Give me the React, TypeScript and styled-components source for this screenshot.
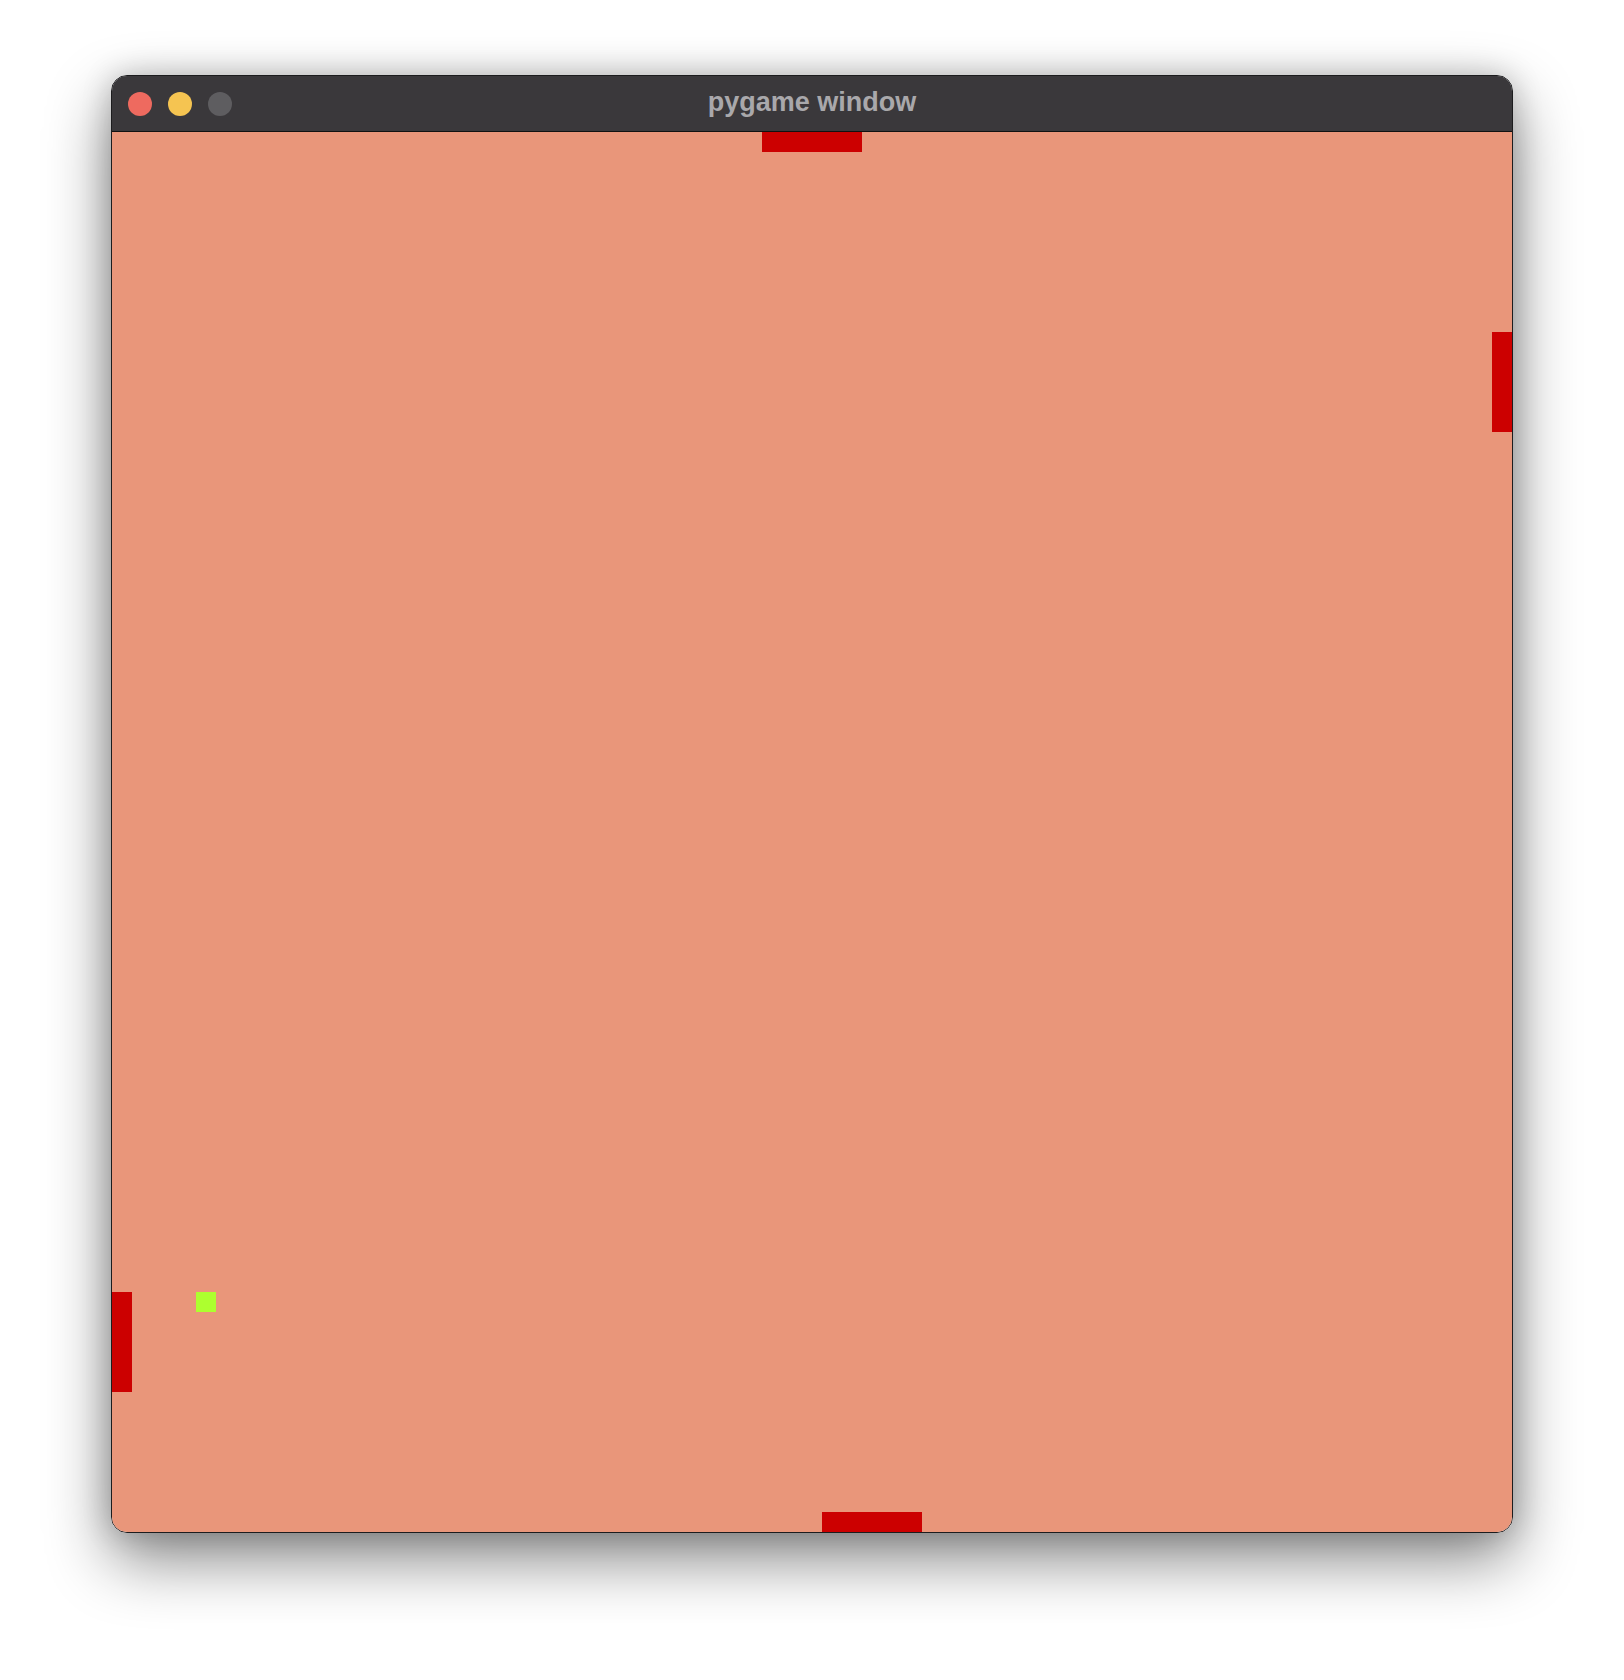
import React from 'react';
import styled, { createGlobalStyle } from 'styled-components';

const GlobalStyle = createGlobalStyle`
  html, body {
    margin: 0;
    padding: 0;
    background: #ffffff;
  }
`;

const Page = styled.div`
  width: 1624px;
  height: 1680px;
  padding: 75px 0 0 111px;
  box-sizing: border-box;
`;

const Window = styled.div`
  width: 1400px;
  border: 1px solid #1c1c1e;
  border-radius: 16px;
  overflow: hidden;
  box-shadow: 0 26px 64px rgba(0, 0, 0, 0.48), 0 0 30px rgba(0, 0, 0, 0.2);
`;

const TitleBar = styled.div`
  position: relative;
  display: flex;
  align-items: center;
  gap: 16px;

  height: 55px;
  padding: 0 16px;

  background-color: #3a383b;
  border-bottom: 1px solid #111;
`;

const Light = styled.span<{ $color: string }>`
  width: 24px;
  height: 24px;
  border-radius: 50%;
  background-color: ${({ $color }) => $color};
`;

const Title = styled.div`
  position: absolute;
  left: 0;
  right: 0;
  top: 0;
  bottom: 2px;

  display: flex;
  align-items: center;
  justify-content: center;

  font-family: 'Liberation Sans', Arial, sans-serif;
  font-weight: 700;
  font-size: 27px;
  color: #a9a8ab;
  pointer-events: none;
`;

const Canvas = styled.div`
  position: relative;
  width: 1400px;
  height: 1400px;
  background-color: #e9967a;
`;

const Block = styled.div<{ $color: string }>`
  position: absolute;
  background-color: ${({ $color }) => $color};
`;

const PADDLE = '#cc0000';
const BALL = '#adff2f';

// game objects, in canvas pixels
const objects = [
  { x: 650, y: 0, w: 100, h: 20, c: PADDLE },
  { x: 710, y: 1380, w: 100, h: 20, c: PADDLE },
  { x: 1380, y: 200, w: 20, h: 100, c: PADDLE },
  { x: 0, y: 1160, w: 20, h: 100, c: PADDLE },
  { x: 84, y: 1160, w: 20, h: 20, c: BALL },
];

function App() {
  return (
    <>
      <GlobalStyle />
      <Page>
        <Window>
          <TitleBar>
            <Light $color="#ee6a5f" />
            <Light $color="#f5c451" />
            <Light $color="#5e5d60" />
            <Title>pygame window</Title>
          </TitleBar>
          <Canvas>
            {objects.map((o, i) => (
              <Block
                key={i}
                $color={o.c}
                style={{ left: o.x, top: o.y, width: o.w, height: o.h }}
              />
            ))}
          </Canvas>
        </Window>
      </Page>
    </>
  );
}

export default App;
